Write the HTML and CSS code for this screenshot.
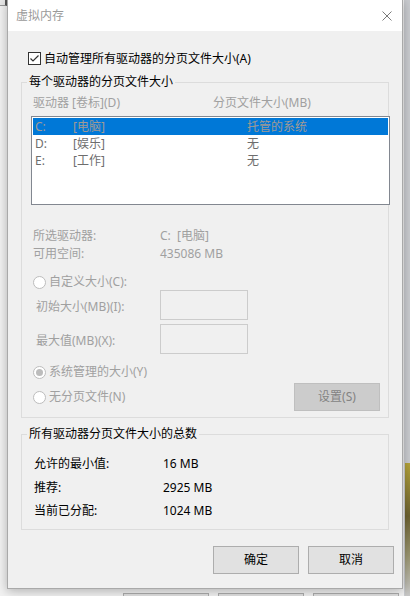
FILE: index.html
```html
<!DOCTYPE html>
<html lang="zh-CN">
<head>
<meta charset="utf-8">
<title>虚拟内存</title>
<link rel="stylesheet" href="styles.css">
</head>
<body>
<div class="desktop">
  <div class="back-corner"></div>
  <div class="back-strip"></div>
  <div class="back-image"></div>
  <div class="back-buttons">
    <span class="back-btn"></span><span class="back-btn"></span><span class="back-btn"></span>
  </div>

  <div class="dialog">
    <div class="titlebar">
      <span class="title">虚拟内存</span>
      <svg class="close" width="10" height="10" viewBox="0 0 10 10"><path d="M0.5 0.5 L9.5 9.5 M9.5 0.5 L0.5 9.5" stroke="#7a7a7a" stroke-width="1" fill="none"/></svg>
    </div>
    <div class="content">
      <div class="check-row">
        <svg class="checkbox" width="13" height="13" viewBox="0 0 13 13"><rect x="0.5" y="0.5" width="12" height="12" fill="#fff" stroke="#333"/><path d="M2.5 6.5 L5 9 L10.5 3.5" stroke="#333" stroke-width="1.2" fill="none"/></svg>
        <span>自动管理所有驱动器的分页文件大小(A)</span>
      </div>

      <fieldset class="group group-drives">
        <legend>每个驱动器的分页文件大小</legend>
        <div class="cols">
          <span class="col-drive">驱动器 [卷标](D)</span>
          <span>分页文件大小(MB)</span>
        </div>
        <div class="listbox">
          <div class="lrow selected"><span>C:</span><span>[电脑]</span><span>托管的系统</span></div>
          <div class="lrow"><span>D:</span><span>[娱乐]</span><span>无</span></div>
          <div class="lrow"><span>E:</span><span>[工作]</span><span>无</span></div>
        </div>
        <div class="kv-list">
          <div class="kv"><span class="k">所选驱动器:</span><span>C:&nbsp;&nbsp;[电脑]</span></div>
          <div class="kv"><span class="k">可用空间:</span><span>435086 MB</span></div>
        </div>
        <div class="radio-row radio-custom">
          <svg class="radio" width="13" height="13" viewBox="0 0 13 13"><circle cx="6.5" cy="6.5" r="6" fill="#fff" stroke="#bcbcbc"/></svg>
          <span>自定义大小(C):</span>
        </div>
        <div class="field-row">
          <span class="field-label">初始大小(MB)(I):</span>
          <span class="textbox"></span>
        </div>
        <div class="field-row field-row-2">
          <span class="field-label">最大值(MB)(X):</span>
          <span class="textbox"></span>
        </div>
        <div class="radio-row radio-system">
          <svg class="radio" width="13" height="13" viewBox="0 0 13 13"><circle cx="6.5" cy="6.5" r="6" fill="#fff" stroke="#bcbcbc"/><circle cx="6.5" cy="6.5" r="3.5" fill="#bcbcbc"/></svg>
          <span>系统管理的大小(Y)</span>
        </div>
        <div class="radio-row radio-none">
          <svg class="radio" width="13" height="13" viewBox="0 0 13 13"><circle cx="6.5" cy="6.5" r="6" fill="#fff" stroke="#bcbcbc"/></svg>
          <span>无分页文件(N)</span>
          <span class="btn btn-disabled">设置(S)</span>
        </div>
      </fieldset>

      <fieldset class="group group-total">
        <legend>所有驱动器分页文件大小的总数</legend>
        <div class="tot"><span class="k">允许的最小值:</span><span>16 MB</span></div>
        <div class="tot"><span class="k">推荐:</span><span>2925 MB</span></div>
        <div class="tot"><span class="k">当前已分配:</span><span>1024 MB</span></div>
      </fieldset>

      <div class="buttons">
        <span class="btn">确定</span>
        <span class="btn">取消</span>
      </div>
    </div>
  </div>
</div>
</body>
</html>
```

FILE: styles.css
```css
* { box-sizing: border-box; }
html, body {
  margin: 0;
  padding: 0;
  width: 410px;
  height: 596px;
  overflow: hidden;
}
body {
  font-family: "Noto Sans", "Noto Sans CJK SC", sans-serif;
  font-size: 12px;
  color: #000;
  background: #f3f3f3;
}
.desktop {
  position: relative;
  width: 410px;
  height: 596px;
  background: #f2f2f2;
}
.back-corner {
  position: absolute;
  left: 0;
  top: 0;
  width: 7px;
  height: 6px;
  border-right: 2px solid #555;
  border-bottom: 1px solid #999;
  background: #e8e8e8;
}
.back-strip {
  position: absolute;
  left: 404px;
  top: 0;
  width: 6px;
  height: 596px;
  background: #c9cbcf;
}
.back-image {
  position: absolute;
  left: 405px;
  top: 463px;
  width: 5px;
  height: 133px;
  background: linear-gradient(#b3a23a, #6b6030 40%, #9a9570 70%, #c8c8c8);
}
.back-buttons {
  position: absolute;
  left: 123px;
  top: 593px;
  display: flex;
  gap: 9px;
}
.back-btn {
  width: 86px;
  height: 10px;
  border: 1px solid #adadad;
  background: #e1e1e1;
}
.dialog {
  position: absolute;
  left: 7px;
  top: -1px;
  width: 396px;
  border: 1px solid #a9a9a9;
  background: #f0f0f0;
  box-shadow: 0 2px 10px rgba(0, 0, 0, 0.28);
}
.titlebar {
  height: 31px;
  background: #fff;
  display: flex;
  align-items: center;
  padding: 0 10px 0 8px;
}
.title {
  color: #9a9a9a;
  font-size: 12px;
  line-height: 14px;
}
.close {
  margin-left: auto;
  display: block;
}
.content {
  padding: 21px 8px 14px 13px;
}
.check-row {
  display: flex;
  align-items: center;
  gap: 3px;
  height: 13px;
  margin-left: 7px;
  line-height: 14px;
}
.checkbox, .radio { display: block; flex: none; }

.group {
  margin: 0;
  width: 368px;
  min-inline-size: 0;
  border: 1px solid #dcdcdc;
  padding: 0 8px 0 9px;
}
.group legend {
  padding: 0 2px;
  margin-left: -4px;
  line-height: 14px;
  color: #000;
}
.group-drives {
  margin-top: 10px;
  padding-top: 7px;
  padding-bottom: 6px;
}
.cols {
  display: flex;
  line-height: 14px;
  margin-left: 2px;
  color: #a0a0a0;
}
.col-drive { width: 180px; }
.listbox {
  margin-top: 6px;
  width: 359px;
  height: 89px;
  border: 1px solid #828790;
  background: #fff;
  padding: 1px;
}
.lrow {
  display: grid;
  grid-template-columns: 38px 174px 1fr;
  height: 17px;
  line-height: 17px;
  padding-left: 2px;
  color: #6d6d6d;
}
.lrow.selected {
  background: #0078d7;
  color: #a09a94;
}
.kv-list {
  margin-top: 22px;
  margin-left: 2px;
  color: #a0a0a0;
}
.kv {
  display: flex;
  line-height: 18px;
}
.kv .k { width: 127px; }
.radio-row {
  display: flex;
  align-items: center;
  gap: 3px;
  margin-left: 2px;
  height: 16px;
  line-height: 16px;
  color: #a0a0a0;
}
.radio-custom { margin-top: 11px; }
.radio-system { margin-top: 10px; }
.radio-none {
  margin-top: 3px;
  height: 28px;
}
.field-row {
  display: flex;
  align-items: center;
  color: #a0a0a0;
}
.field-row-2 { margin-top: 4px; }
.field-label {
  width: 129px;
  padding-left: 5px;
  padding-top: 3px;
  line-height: 14px;
}
.textbox {
  width: 88px;
  height: 30px;
  border: 1px solid #cccccc;
  background: #f0f0f0;
}
.btn {
  display: flex;
  align-items: center;
  justify-content: center;
  width: 86px;
  height: 28px;
  border: 1px solid #adadad;
  background: #e1e1e1;
  color: #000;
  line-height: 14px;
}
.btn-disabled {
  margin-left: auto;
  background: #cccccc;
  border-color: #bfbfbf;
  color: #838383;
}
.group-total {
  margin-top: 9px;
  padding-top: 11px;
  padding-bottom: 6.5px;
}
.tot {
  display: flex;
  line-height: 23.5px;
  margin-left: 3px;
}
.tot .k { width: 129px; }
.buttons {
  display: flex;
  justify-content: flex-end;
  gap: 9px;
  margin-top: 16px;
}
```
